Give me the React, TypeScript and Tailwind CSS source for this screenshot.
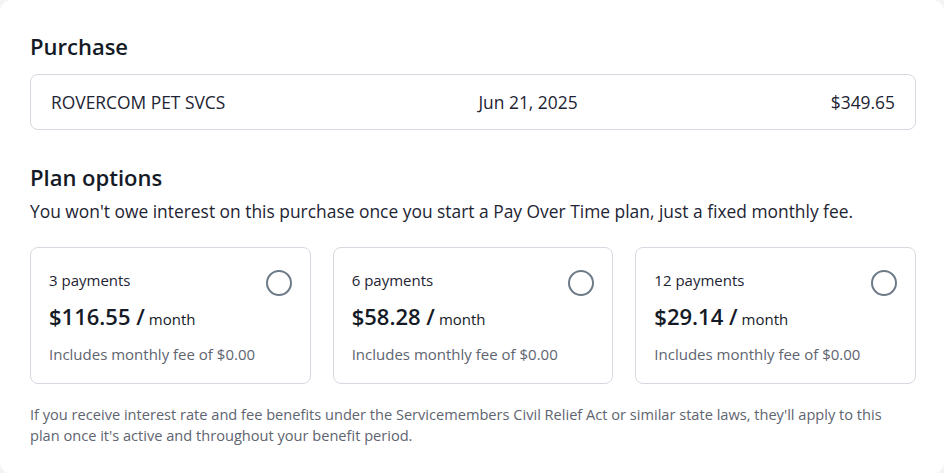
import React from 'react';

interface Plan {
  count: number;
  amount: string;
}

const plans: Plan[] = [
  { count: 3, amount: '$116.55' },
  { count: 6, amount: '$58.28' },
  { count: 12, amount: '$29.14' },
];

const PlanCard: React.FC<{ plan: Plan }> = ({ plan }) => (
  <div className="flex-1 rounded-lg border border-[#d5dae1] bg-white pl-[18px] pr-[18px] pt-[22px] pb-[19px]">
    <div className="flex items-start justify-between">
      <span className="text-[15px] leading-[20px] text-[#1d2433]">{plan.count} payments</span>
      <span className="h-[26px] w-[26px] rounded-full border-2 border-[#6d7a88]" />
    </div>
    <div className="mt-[4px] flex items-baseline text-[#141a26]">
      <span className="text-[22px] font-semibold leading-[32px]">{plan.amount} /</span>
      <span className="ml-[4px] text-[15px]">month</span>
    </div>
    <p className="mt-[12px] text-[15px] leading-[20px] text-[#5e6470]">Includes monthly fee of $0.00</p>
  </div>
);

export default function App() {
  return (
    <div
      className="min-h-[473px] w-[944px] bg-[#f3f4f6]"
      style={{ fontFamily: '"Open Sans", "Noto Sans", sans-serif' }}
    >
      <div className="min-h-[473px] rounded-xl bg-white pl-[30px] pr-[28px] pt-[31px] pb-[28px]">
        <h2 className="text-[22px] font-semibold leading-[30px] text-[#141a26]">Purchase</h2>
        <div className="mt-[13px] flex h-[56px] items-center justify-between rounded-lg border border-[#d5dae1] px-[20px] text-[17.4px] text-[#1d2433]">
          <span>ROVERCOM PET SVCS</span>
          <span>Jun 21, 2025</span>
          <span>$349.65</span>
        </div>

        <h2 className="mt-[32px] text-[22px] font-semibold leading-[30px] text-[#141a26]">Plan options</h2>
        <p className="mt-[6px] text-[17.4px] leading-[26px] text-[#1d2433]">
          You won't owe interest on this purchase once you start a Pay Over Time plan, just a fixed monthly fee.
        </p>

        <div className="mt-[23px] flex gap-[22px]">
          {plans.map((plan) => (
            <PlanCard key={plan.count} plan={plan} />
          ))}
        </div>

        <p className="mt-[20px] max-w-[860px] text-[14.6px] leading-[21px] text-[#5e6470]">
          If you receive interest rate and fee benefits under the Servicemembers Civil Relief Act or similar state laws, they'll apply to this plan once it's active and throughout your benefit period.
        </p>
      </div>
    </div>
  );
}
